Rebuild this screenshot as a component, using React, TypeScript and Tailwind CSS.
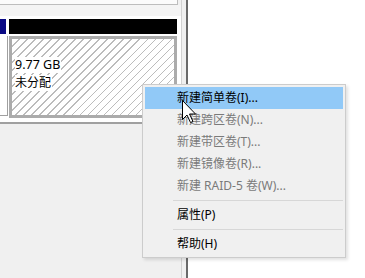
import React from "react";

const items: { label: string; enabled: boolean; highlight?: boolean; sepBefore?: boolean }[] = [
  { label: "新建简单卷(I)...", enabled: true, highlight: true },
  { label: "新建跨区卷(N)...", enabled: false },
  { label: "新建带区卷(T)...", enabled: false },
  { label: "新建镜像卷(R)...", enabled: false },
  { label: "新建 RAID-5 卷(W)...", enabled: false },
  { label: "属性(P)", enabled: true, sepBefore: true },
  { label: "帮助(H)", enabled: true, sepBefore: true },
];

export default function App() {
  return (
    <div className="relative flex w-[365px] h-[278px] overflow-hidden bg-white font-['Noto_Sans','Noto_Sans_CJK_SC',sans-serif] text-[12px]">
      {/* left graphical disk panel */}
      <div className="w-[181px] bg-[#f0f0f0] flex flex-col">
        <div className="h-[5px] w-[178px] bg-[#fbfbfb] border-b border-r border-[#bdbdbd]" />
        <div className="h-[11px] bg-[#f4f4f4]" />
        <div className="flex flex-col bg-white pt-[3px] pb-[4px] border-b-2 border-[#a0a0a0]">
          <div className="flex h-[15px]">
            <div className="w-[6px] bg-[#0a0a85]" />
            <div className="w-[3px]" />
            <div className="w-[168px] bg-black" />
          </div>
          <div className="h-[2px]" />
          <div className="flex h-[82px]">
            <div className="w-[8px] h-[80px] bg-white border-r border-b border-[#a0a0a0]" />
            <div className="w-[1px]" />
            <div className="w-[168px] h-[82px] border-[3px] border-[#ababab] bg-white bg-[repeating-linear-gradient(135deg,transparent_0px,transparent_4.9px,#bcbcbc_4.9px,#bcbcbc_5.66px)] pl-[3px] pt-[18px] flex flex-col gap-[2px] items-start">
              <span className="bg-white h-[16px] leading-[16px] pr-[1px] text-black text-[12.5px]">9.77 GB</span>
              <span className="bg-white h-[16px] leading-[16px] pr-[1px] text-black">未分配</span>
            </div>
          </div>
        </div>
      </div>
      <div className="w-px bg-[#d2d2d2]" />
      <div className="w-[4px] bg-[#f0f0f0]" />
      <div className="w-[2px] bg-[#6a6a6a]" />
      <div className="flex-1 bg-white" />

      {/* context menu */}
      <div className="absolute left-[142px] top-[84px] w-[204px] border border-[#cccccc] bg-[#f0f0f0] p-[2px] flex flex-col shadow-[2px_2px_3px_rgba(0,0,0,0.12)]">
        {items.map((it, i) => (
          <React.Fragment key={i}>
            {it.sepBefore && (
              <div className="h-[7px] flex items-center pl-[28px]">
                <div className="h-px w-full bg-[#d7d7d7]" />
              </div>
            )}
            <div
              className={
                "h-[22px] leading-[22px] pl-[32px] whitespace-nowrap " +
                (it.highlight ? "bg-[#91c9f7] " : "") +
                (it.enabled ? "text-black" : "text-[#7a7a7a]")
              }
            >
              {it.label}
            </div>
          </React.Fragment>
        ))}
      </div>

      {/* mouse cursor */}
      <svg
        className="absolute left-[182px] top-[100px]"
        width="16"
        height="24"
        viewBox="0 0 16 24"
      >
        <path
          d="M0.5 0.5 V19.5 L5 15 L8.5 22.5 L11 21.5 L7.5 14 H13.5 Z"
          fill="white"
          stroke="black"
          strokeWidth="1"
          strokeLinejoin="miter"
        />
      </svg>
    </div>
  );
}
